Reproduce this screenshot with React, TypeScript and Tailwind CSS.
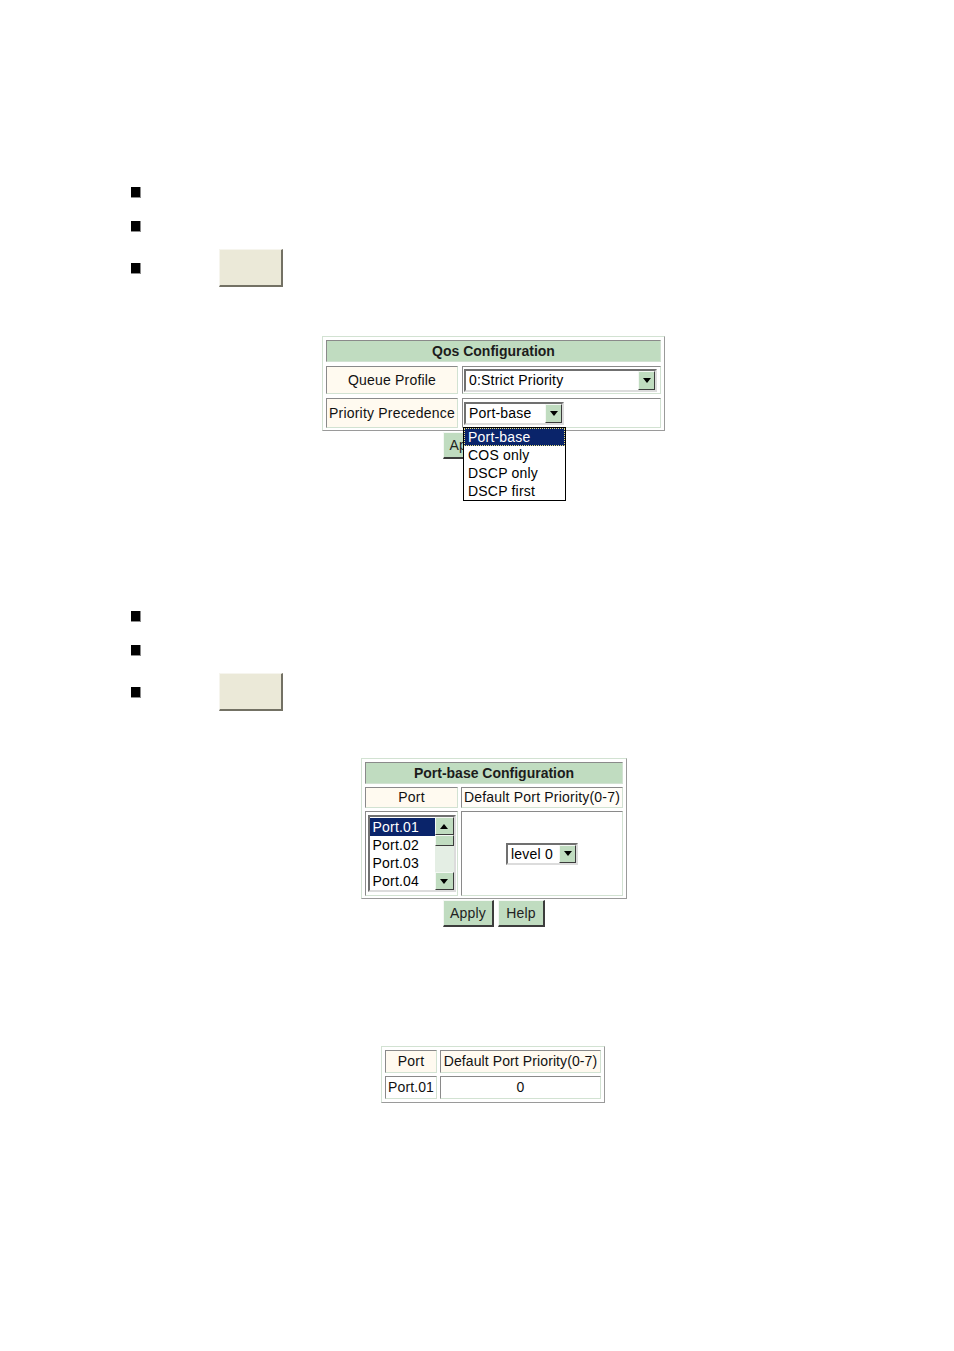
import React from 'react';

const cellBorder =
    'border border-t-[#8a8a8a] border-l-[#8a8a8a] border-b-[#d2e2d2] border-r-[#d2e2d2]';
const tableBorder =
    'border border-t-[#d2e2d2] border-l-[#d2e2d2] border-b-[#9a9a9a] border-r-[#9a9a9a]';
const outset =
    'border border-t-[#f4f8f4] border-l-[#f4f8f4] border-b-[#3c3c3c] border-r-[#3c3c3c]';

function Bullet() {
    return <div className="w-[10px] h-[11px] bg-black border-r border-b border-[#8c8c8c]" />;
}

function BlankButton() {
    return (
        <div className="w-[64px] h-[38px] bg-[#ebe9d8] border-t border-l border-[#f6f5ee] border-r-2 border-b-2 border-r-[#737164] border-b-[#737164]" />
    );
}

function Arrow({ up = false }: { up?: boolean }) {
    return (
        <svg width="8" height="5" viewBox="0 0 8 5">
            {up ? <polygon points="0,5 8,5 4,0" fill="#000" /> : <polygon points="0,0 8,0 4,5" fill="#000" />}
        </svg>
    );
}

function ArrowButton({ up = false, className = '' }: { up?: boolean; className?: string }) {
    return (
        <div className={`w-[17px] bg-[#c0dcc0] ${outset} flex items-center justify-center ${className}`}>
            <Arrow up={up} />
        </div>
    );
}

function Select({ text, w, h }: { text: string; w: string; h: string }) {
    return (
        <div
            className={`${w} ${h} flex bg-white border-2 border-t-[#707070] border-l-[#707070] border-b-[#dcdcdc] border-r-[#dcdcdc]`}
        >
            <span className="flex-1 pl-[3px] text-[14px] leading-[19px] tracking-[0.2px] text-black whitespace-nowrap overflow-hidden">
                {text}
            </span>
            <ArrowButton className="h-full" />
        </div>
    );
}

function SideBlock({ offsetTop }: { offsetTop: string }) {
    return (
        <div className={`${offsetTop} ml-[131px]`}>
            <Bullet />
            <div className="mt-[23px]">
                <Bullet />
            </div>
            <div className="mt-[17px] flex items-center h-[38px]">
                <Bullet />
                <div className="ml-[78px]">
                    <BlankButton />
                </div>
            </div>
        </div>
    );
}

function ApplyHelp({ withHelp = true }: { withHelp?: boolean }) {
    return (
        <div className="mt-[1px] flex justify-center gap-[4px]">
            <button className={`w-[51px] h-[27px] bg-[#c0dcc0] ${outset} border-b-2 border-r-2 text-[14px] tracking-[0.2px] text-[#222]`}>
                Apply
            </button>
            {withHelp ? (
                <button className={`w-[47px] h-[27px] bg-[#c0dcc0] ${outset} border-b-2 border-r-2 text-[14px] tracking-[0.2px] text-[#222]`}>
                    Help
                </button>
            ) : (
                <div className={`w-[47px] h-[27px] bg-[#c0dcc0] ${outset} border-b-2 border-r-2`} />
            )}
        </div>
    );
}

function QosConfig() {
    const options = ['Port-base', 'COS only', 'DSCP only', 'DSCP first'];
    return (
        <div className="relative mt-[49px] ml-[322px] w-[343px]">
            <div className={`${tableBorder} pt-[3px] pb-[2px] px-[3px] bg-white`}>
                <div className="grid grid-cols-[132px_199px] grid-rows-[22px_28px_30px] gap-[4px]">
                    <div className={`col-span-2 ${cellBorder} bg-[#c0dcc0] flex items-center justify-center text-[14px] font-bold text-[#1c1c1c]`}>
                        Qos Configuration
                    </div>
                    <div className={`${cellBorder} bg-[#fffaf0] flex items-center justify-center text-[14px] tracking-[0.2px] text-[#111]`}>
                        Queue Profile
                    </div>
                    <div className={`${cellBorder} bg-white flex items-center pl-[1px]`}>
                        <Select text="0:Strict Priority" w="w-[193px]" h="h-[23px]" />
                    </div>
                    <div className={`${cellBorder} bg-[#fffaf0] flex items-center justify-center text-[14px] tracking-[0.2px] text-[#111] whitespace-nowrap`}>
                        Priority Precedence
                    </div>
                    <div className={`${cellBorder} bg-white flex items-center pl-[1px]`}>
                        <Select text="Port-base" w="w-[100px]" h="h-[23px]" />
                    </div>
                </div>
            </div>
            <ApplyHelp withHelp={false} />
            <div className="absolute left-[141px] top-[91px] w-[103px] bg-white border border-black">
                {options.map((o, i) => (
                    <div
                        key={o}
                        className={`h-[18px] leading-[16px] pl-[3px] text-[14px] tracking-[0.2px] ${
                            i === 0
                                ? 'bg-[#0a246a] text-white border border-dotted border-[#e8e080]'
                                : 'text-black border border-transparent'
                        }`}
                    >
                        {o}
                    </div>
                ))}
            </div>
        </div>
    );
}

function PortList() {
    const ports = ['Port.01', 'Port.02', 'Port.03', 'Port.04'];
    return (
        <div className="w-[88px] h-[77px] flex bg-white border-2 border-t-[#707070] border-l-[#707070] border-b-[#dcdcdc] border-r-[#dcdcdc]">
            <div className="flex-1 pt-[1px]">
                {ports.map((p, i) => (
                    <div
                        key={p}
                        className={`h-[18px] leading-[18px] pl-[3px] text-[14px] tracking-[0.2px] ${
                            i === 0 ? 'bg-[#0a246a] text-white' : 'text-black'
                        }`}
                    >
                        {p}
                    </div>
                ))}
            </div>
            <div className="w-[19px] flex flex-col">
                <ArrowButton up className="h-[18px] w-[19px]" />
                <div className={`h-[11px] w-[19px] bg-[#c0dcc0] ${outset}`} />
                <div className="flex-1 bg-[#e4eee4]" />
                <ArrowButton className="h-[18px] w-[19px]" />
            </div>
        </div>
    );
}

function PortBaseConfig() {
    return (
        <div className="mt-[47px] ml-[361px] w-[266px]">
            <div className={`${tableBorder} pt-[3px] pb-[2px] px-[3px] bg-white`}>
                <div className="grid grid-cols-[93px_162px] grid-rows-[22px_21px_85px] gap-[3px]">
                    <div className={`col-span-2 ${cellBorder} bg-[#c0dcc0] flex items-center justify-center text-[14px] font-bold text-[#1c1c1c]`}>
                        Port-base Configuration
                    </div>
                    <div className={`${cellBorder} bg-[#fffaf0] flex items-center justify-center text-[14px] tracking-[0.2px] text-[#111]`}>
                        Port
                    </div>
                    <div className={`${cellBorder} bg-[#fffdf8] flex items-center justify-center text-[14px] text-[#111] whitespace-nowrap tracking-[0.2px]`}>
                        Default Port Priority(0-7)
                    </div>
                    <div className={`${cellBorder} bg-white flex items-center justify-center`}>
                        <PortList />
                    </div>
                    <div className={`${cellBorder} bg-white flex items-center justify-center`}>
                        <Select text="level 0" w="w-[72px]" h="h-[22px]" />
                    </div>
                </div>
            </div>
            <ApplyHelp />
        </div>
    );
}

function PortTable() {
    return (
        <div className="mt-[119px] ml-[381px] w-[224px]">
            <div className={`${tableBorder} pt-[3px] pb-[3px] px-[3px] bg-white`}>
                <div className="grid grid-cols-[52px_161px] grid-rows-[23px_23px] gap-[3px]">
                    <div className={`${cellBorder} bg-[#fffaf0] flex items-center justify-center text-[14px] tracking-[0.2px] text-[#111]`}>
                        Port
                    </div>
                    <div className={`${cellBorder} bg-[#fffaf0] flex items-center justify-center text-[14px] text-[#111] whitespace-nowrap tracking-[0.1px]`}>
                        Default Port Priority(0-7)
                    </div>
                    <div className={`${cellBorder} bg-white flex items-center justify-center text-[14px] tracking-[0.1px] text-[#111]`}>
                        Port.01
                    </div>
                    <div className={`${cellBorder} bg-white flex items-center justify-center text-[14px] text-[#111]`}>
                        0
                    </div>
                </div>
            </div>
        </div>
    );
}

export default function App() {
    return (
        <div className="w-[954px] h-[1351px] bg-white overflow-hidden font-['Liberation_Sans',Arial,sans-serif] pt-[187px]">
            <SideBlock offsetTop="" />
            <QosConfig />
            <SideBlock offsetTop="mt-[152px]" />
            <PortBaseConfig />
            <PortTable />
        </div>
    );
}
